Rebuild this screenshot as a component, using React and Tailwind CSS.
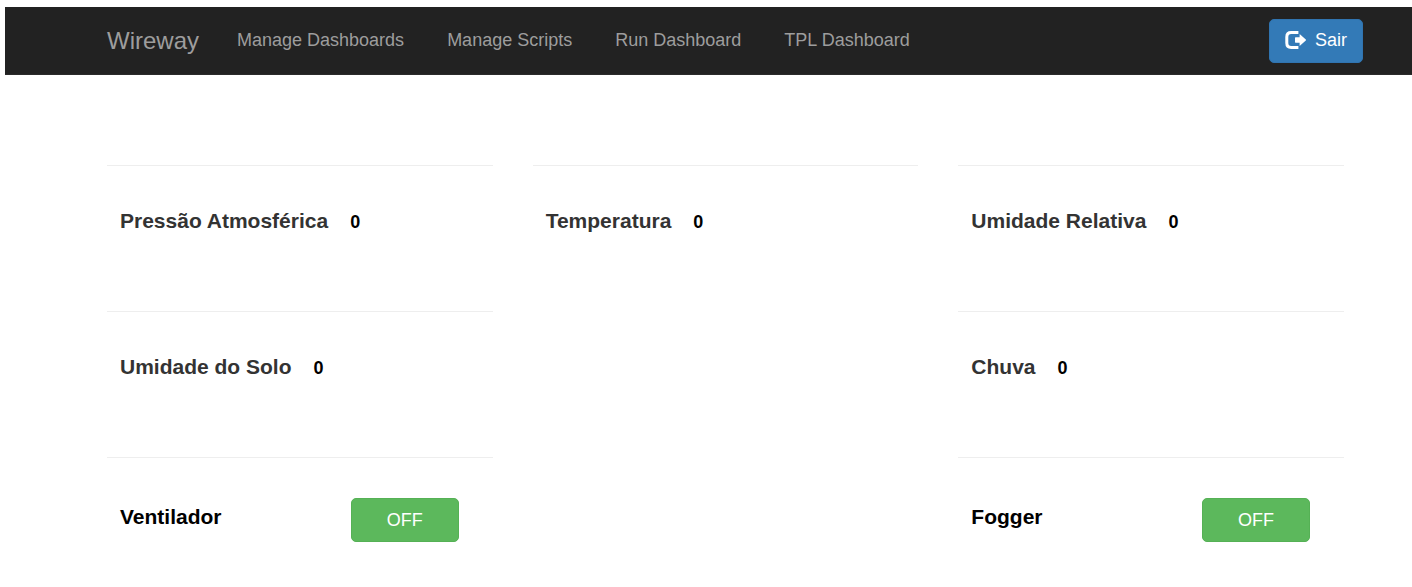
const links = ["Manage Dashboards", "Manage Scripts", "Run Dashboard", "TPL Dashboard"];

function LogOutIcon() {
  return (
    <svg viewBox="0 0 22 20" className="h-5 w-[22px]" aria-hidden="true">
      <path d="M13.4 1.6H6.2Q1.8 1.6 1.8 6V12Q1.8 16.4 6.2 16.4H13.4" fill="none" stroke="#fff" strokeWidth="3" />
      <path d="M10.6 6.3H14.6V3.6Q14.6 2.8 15.2 3.4L20.8 8.5Q21.3 9 20.8 9.5L15.2 14.6Q14.6 15.2 14.6 14.4V11.7H10.6Q10 11.7 10 11.1V6.9Q10 6.3 10.6 6.3Z" fill="#fff" />
    </svg>
  );
}

function Reading({ label, value, className = "" }) {
  return (
    <section className={`flex items-baseline border-t border-[#eeeeee] pt-[39px] pl-[13px] leading-8 font-bold ${className}`}>
      <h2 className="text-[21px] text-[#333333]">{label}</h2>
      <output aria-label={label} className="ml-[22px] text-[18px] text-black">{value}</output>
    </section>
  );
}

function Toggle({ label, className = "" }) {
  return (
    <section className={`flex items-start justify-between border-t border-[#eeeeee] pt-10 pr-[34px] pl-[13px] ${className}`}>
      <h2 className="pt-[3px] text-[21px] leading-8 font-bold text-black">{label}</h2>
      <button
        type="button"
        aria-label={`${label} OFF`}
        className="h-11 w-[108px] rounded-[5px] border border-[#55b155] bg-[#5cb85c] text-[18px] text-white"
      >
        OFF
      </button>
    </section>
  );
}

export default function App() {
  return (
    <div className="pt-[7px] pl-[5px] font-['Liberation_Sans',Arial,sans-serif]">
      <header className="flex h-[68px] items-center justify-between border-b border-[#2b2b2b] bg-[#222222] pr-[49px] pl-[102px] text-[#9d9d9d]">
        <nav className="flex items-center gap-[38px]">
          <a href="#" className="text-[24px]">Wireway</a>
          <div className="flex gap-[43px] text-[18px]">
            {links.map((link) => (
              <a key={link} href="#">{link}</a>
            ))}
          </div>
        </nav>
        <button
          type="button"
          className="flex h-11 items-center gap-2 rounded-[5px] border border-[#3074b0] bg-[#337ab7] px-[15px] text-[18px] text-white"
        >
          <LogOutIcon />
          Sair
        </button>
      </header>
      <main className="grid auto-rows-[146px] grid-cols-3 gap-x-10 pt-[90px] pr-[68px] pl-[102px]">
        <Reading label="Pressão Atmosférica" value="0" />
        <Reading label="Temperatura" value="0" />
        <Reading label="Umidade Relativa" value="0" />
        <Reading label="Umidade do Solo" value="0" />
        <Reading label="Chuva" value="0" className="col-start-3" />
        <Toggle label="Ventilador" />
        <Toggle label="Fogger" className="col-start-3" />
      </main>
    </div>
  );
}
